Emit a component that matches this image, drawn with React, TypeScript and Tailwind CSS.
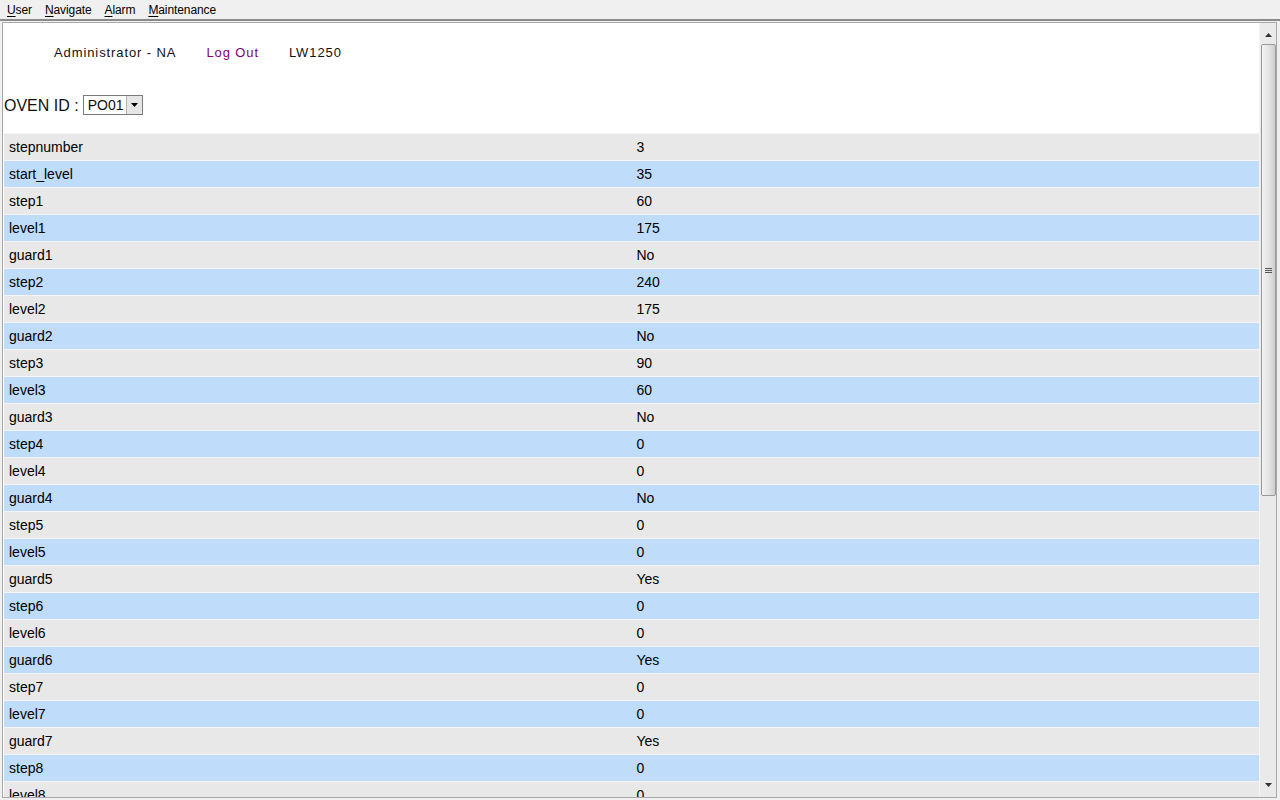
import React from 'react';

const rows: [string, string][] = [
  ['stepnumber', '3'],
  ['start_level', '35'],
  ['step1', '60'],
  ['level1', '175'],
  ['guard1', 'No'],
  ['step2', '240'],
  ['level2', '175'],
  ['guard2', 'No'],
  ['step3', '90'],
  ['level3', '60'],
  ['guard3', 'No'],
  ['step4', '0'],
  ['level4', '0'],
  ['guard4', 'No'],
  ['step5', '0'],
  ['level5', '0'],
  ['guard5', 'Yes'],
  ['step6', '0'],
  ['level6', '0'],
  ['guard6', 'Yes'],
  ['step7', '0'],
  ['level7', '0'],
  ['guard7', 'Yes'],
  ['step8', '0'],
  ['level8', '0'],
  ['guard8', 'Yes'],
];

const MenuItem: React.FC<{ first: string; rest: string }> = ({ first, rest }) => (
  <span>
    <span className="underline underline-offset-2">{first}</span>
    {rest}
  </span>
);

const ScrollBar: React.FC = () => (
  <div className="w-[17px] flex-shrink-0 bg-[#eaeaea] border-l border-[#f4f4f4] flex flex-col items-center py-[4px]">
    <div className="h-[16px] w-full flex items-center justify-center">
      <svg width="7" height="4" viewBox="0 0 7 4">
        <path d="M3.5 0 L7 4 L0 4 Z" fill="#333" />
      </svg>
    </div>
    <div className="mt-[1px] w-[15px] h-[452px] rounded-[2px] border border-[#9a9a9a] bg-gradient-to-r from-[#f2f2f2] via-[#e4e4e4] to-[#cfcfcf] flex items-center justify-center">
      <div className="flex flex-col gap-[1px]">
        <div className="w-[7px] h-[1px] bg-[#555]" />
        <div className="w-[7px] h-[1px] bg-[#555]" />
        <div className="w-[7px] h-[1px] bg-[#555]" />
      </div>
    </div>
    <div className="flex-1" />
    <div className="h-[16px] w-full flex items-center justify-center">
      <svg width="7" height="4" viewBox="0 0 7 4">
        <path d="M0 0 L7 0 L3.5 4 Z" fill="#333" />
      </svg>
    </div>
  </div>
);

export default function App() {
  return (
    <div className="w-[1280px] h-[800px] overflow-hidden flex flex-col bg-[#f0f0f0] font-['Liberation_Sans',Arial,sans-serif]">
      <div className="h-[19px] flex items-center gap-[13px] pl-[7px] text-[12px] tracking-[-0.1px] text-black">
        <MenuItem first="U" rest="ser" />
        <MenuItem first="N" rest="avigate" />
        <MenuItem first="A" rest="larm" />
        <MenuItem first="M" rest="aintenance" />
      </div>
      <div className="flex-1 min-h-0 border-t-2 border-[#8a8a8a] bg-[#f0f0f0] pt-[1px] pl-[2px] pb-[2px] pr-[3px]">
        <div className="h-full border border-[#a8a8a8] flex bg-white">
          <div className="flex-1 min-w-0 overflow-hidden pl-[1px]">
            <div className="h-[61px] flex items-end pb-[22px] pl-[50px] gap-[30px] text-[13px] tracking-[0.9px] text-[#111]">
              <span>Administrator - NA</span>
              <span className="text-[#800080]">Log Out</span>
              <span>LW1250</span>
            </div>
            <div className="h-[49px] flex items-start pt-[11px] text-[16px] text-[#111]">
              <span className="mt-[-1px]">OVEN ID :</span>
              <div className="ml-[4px] h-[20px] w-[60px] border border-[#7a7a7a] flex items-stretch bg-white">
                <span className="flex-1 pl-[4px] text-[14px] leading-[18px]">PO01</span>
                <div className="w-[16px] bg-[#e6e6e6] border-l border-[#b0b0b0] flex items-center justify-center">
                  <svg width="7" height="4" viewBox="0 0 7 4">
                    <path d="M0 0 L7 0 L3.5 4 Z" fill="#000" />
                  </svg>
                </div>
              </div>
            </div>
            <div className="text-[14px] text-black">
              {rows.map(([k, v], i) => (
                <div
                  key={k}
                  className={`grid grid-cols-2 h-[27px] border-t border-[#f5f5f5] ${i % 2 === 0 ? 'bg-[#e8e8e8]' : 'bg-[#bfdcfa]'}`}
                >
                  <div className="pl-[5px] flex items-center">{k}</div>
                  <div className="pl-[5px] flex items-center">{v}</div>
                </div>
              ))}
            </div>
          </div>
          <ScrollBar />
        </div>
      </div>
    </div>
  );
}
